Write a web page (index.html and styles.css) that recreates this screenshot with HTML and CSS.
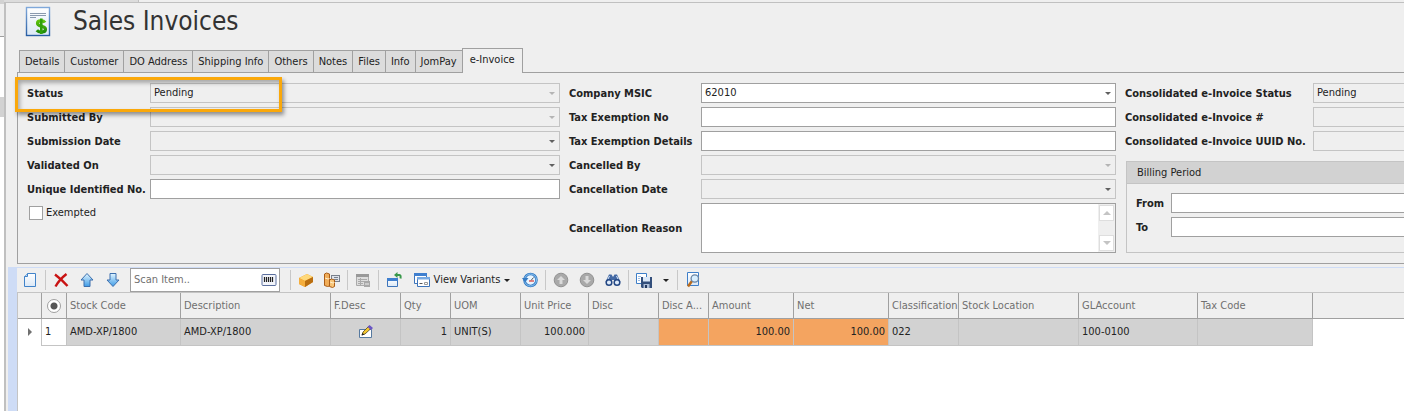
FILE: index.html
```html
<!DOCTYPE html>
<html lang="en">
<head>
<meta charset="utf-8">
<title>Sales Invoices</title>
<link rel="stylesheet" href="styles.css">
</head>
<body>
<div class="nav-edge"><div class="nav-top"></div><div class="nav-item"></div></div>
<div class="main">
  <div class="doc-tabs"><div class="doc-tab"></div></div>
  <main class="window">
    <header class="title-bar">
      <svg class="title-icon" width="26" height="31" viewBox="0 0 26 31">
        <defs>
          <linearGradient id="paper" x1="0" y1="0" x2="0" y2="1"><stop offset="0" stop-color="#fff"/><stop offset="1" stop-color="#dbe8f6"/></linearGradient>
          <linearGradient id="frame" x1="0" y1="0" x2="0" y2="1"><stop offset="0" stop-color="#7fa8da"/><stop offset="1" stop-color="#285ea4"/></linearGradient>
          <linearGradient id="blue" x1="0" y1="0" x2="0" y2="1"><stop offset="0" stop-color="#e2f5ff"/><stop offset="1" stop-color="#3d9be6"/></linearGradient>
          <linearGradient id="green" x1="0" y1="0" x2="0" y2="1"><stop offset="0" stop-color="#5fc410"/><stop offset="1" stop-color="#1f8a08"/></linearGradient>
        </defs>
        <rect x="1.500" y="1.500" width="23" height="28" fill="url(#paper)" stroke="url(#frame)" stroke-width="1.400"/>
        <path d="M5 7.500h16M5 9.500h16M5 11.500h6" stroke="#7d8da5" stroke-width=".9"/>
        <path d="M20 16.500c-1.500-2.300-7.500-2.500-7.500.7 0 3.800 8 2.300 8 6 0 3.600-6.500 3.600-8.700 1" fill="none" stroke="url(#green)" stroke-width="3.200"/>
        <path d="M15 12.500h2.600v15.500H15z" fill="#2fa009"/>
      </svg>
      <h1>Sales Invoices</h1>
    </header>

    <nav class="tabs">
      <button>Details</button>
      <button>Customer</button>
      <button>DO Address</button>
      <button>Shipping Info</button>
      <button>Others</button>
      <button>Notes</button>
      <button>Files</button>
      <button>Info</button>
      <button>JomPay</button>
      <button class="active">e-Invoice</button>
    </nav>

    <section class="panel">
      <div class="col col-status">
        <div class="row"><label for="status">Status</label><div class="combo off"><select id="status" disabled><option>Pending</option></select></div></div>
        <div class="row"><label for="submittedBy">Submitted By</label><div class="combo off"><select id="submittedBy" disabled></select></div></div>
        <div class="row"><label for="submissionDate">Submission Date</label><div class="combo readonly"><select id="submissionDate" disabled></select></div></div>
        <div class="row"><label for="validatedOn">Validated On</label><div class="combo readonly"><select id="validatedOn" disabled></select></div></div>
        <div class="row"><label for="uin">Unique Identified No.</label><input type="text" id="uin"></div>
        <div class="check"><input type="checkbox" id="exempted"><label for="exempted">Exempted</label></div>
      </div>
      <div class="col col-tax">
        <div class="row"><label for="msic">Company MSIC</label><div class="combo"><select id="msic"><option>62010</option></select></div></div>
        <div class="row"><label for="exemptNo">Tax Exemption No</label><input type="text" id="exemptNo"></div>
        <div class="row"><label for="exemptDetails">Tax Exemption Details</label><input type="text" id="exemptDetails"></div>
        <div class="row"><label for="cancelledBy">Cancelled By</label><div class="combo off"><select id="cancelledBy" disabled></select></div></div>
        <div class="row"><label for="cancelDate">Cancellation Date</label><div class="combo readonly"><select id="cancelDate" disabled></select></div></div>
        <div class="row tall"><label for="reason">Cancellation Reason</label>
          <div class="memo">
            <textarea id="reason"></textarea>
            <div class="scroll"><button class="up" aria-label="Scroll up"></button><button class="down" aria-label="Scroll down"></button></div>
          </div>
        </div>
      </div>
      <div class="col col-consol">
        <div class="row"><label for="cStatus">Consolidated e-Invoice Status</label><input type="text" id="cStatus" value="Pending" disabled></div>
        <div class="row"><label for="cNo">Consolidated e-Invoice #</label><input type="text" id="cNo" disabled></div>
        <div class="row"><label for="cUuid">Consolidated e-Invoice UUID No.</label><input type="text" id="cUuid" disabled></div>
        <fieldset class="group">
          <legend>Billing Period</legend>
          <div class="group-body">
            <div class="row"><label for="from">From</label><input type="text" id="from"></div>
            <div class="row"><label for="to">To</label><input type="text" id="to"></div>
          </div>
        </fieldset>
      </div>
      <div class="highlight"></div>
    </section>

    <section class="details">
      <div class="toolbar">
        <button aria-label="New"><svg viewBox="0 0 16 16"><path d="M5.500 1.500h8v13h-11v-10z" fill="url(#paper)" stroke="#4183c9"/><path d="M2.500 4.500h3v-3" fill="#b9d8f5" stroke="#4183c9"/></svg></button>
        <span class="sep"></span>
        <button aria-label="Delete"><svg viewBox="0 0 16 16"><path d="M2 2.500C6 5.500 11 10 14.500 14M13.500 2C9 5.500 5 10 2.500 14.500" fill="none" stroke="#c91313" stroke-width="2.400"/></svg></button>
        <button aria-label="Move up"><svg viewBox="0 0 16 16"><path d="M8 1.500l6 6.500h-3v6.500H5V8H2z" fill="url(#blue)" stroke="#3c6fae"/></svg></button>
        <button aria-label="Move down"><svg viewBox="0 0 16 16"><path d="M8 14.500L2 8h3V1.500h6V8h3z" fill="url(#blue)" stroke="#3c6fae"/></svg></button>
        <div class="scan">
          <input type="text" placeholder="Scan Item.." aria-label="Scan Item">
          <button aria-label="Scan barcode"><svg viewBox="0 0 16 12"><rect x="1" y="0.500" width="14" height="11" rx="1" fill="#f2f4fa" stroke="#5b6f9e"/><path d="M3.500 3v5M5.500 3v5M7.500 3v5M9.500 3v5M11.500 3v5" stroke="#222" stroke-width="1.200"/></svg></button>
        </div>
        <span class="gap"></span>
        <span class="sep"></span>
        <button aria-label="Item"><svg viewBox="0 0 16 16"><path d="M1 6l8-4 6 3v5l-8 5-6-3z" fill="#e88f1c"/><path d="M1 6l8-4 6 3-8 4z" fill="#ffd97a"/><path d="M1 6l6 3v6l-6-3z" fill="#f5ae3c"/><path d="M7 9l8-4v5l-8 5z" fill="#b96e10"/></svg></button>
        <button aria-label="Item package"><svg viewBox="0 0 16 16"><rect x="7.500" y="3.500" width="8" height="6" fill="#dde2ea" stroke="#79808c"/><path d="M10 5.500h4M10 7.500h4" stroke="#79808c"/><path d="M.5 2l2-1 3 1v12l-2 .5-3-1z" fill="#f1ad58" stroke="#ab5d16"/><path d="M5.500 8l2-1 3 1v6.500l-2 1-3-1z" fill="#f8c477" stroke="#ab5d16"/><path d="M1 6l3 1 1.500-.5M6 10l3 1 1.500-.5" fill="none" stroke="#fff0ce"/></svg></button>
        <span class="sep"></span>
        <button aria-label="Grid options" disabled><svg viewBox="0 0 16 16"><path d="M1.500 2.500h12v11h-12z" fill="#ddd" stroke="#aaa"/><path d="M1 2h13v3H1z" fill="#999"/><path d="M3 7.500h9M3 9.500h9M3 11.500h5M5.500 6v7" stroke="#aaa"/><path d="M9 9h6v6H9z" fill="#a8a8a8"/><path d="M10 12h4" stroke="#eee"/></svg></button>
        <span class="sep"></span>
        <button aria-label="Open window"><svg viewBox="0 0 16 16"><path d="M1.500 6.500h10v8h-10z" fill="url(#paper)" stroke="#3d74ba"/><path d="M1 6h11v3H1z" fill="#3f7fcf"/><path d="M10 3h3.500q1.500 0 1 3.500" fill="none" stroke="#39984a" stroke-width="2"/><path d="M11.500 0L8 3l3.500 3z" fill="#39984a"/></svg></button>
        <button class="variants"><svg viewBox="0 0 16 16"><path d="M.5 1.500h12v10H.5z" fill="#fff" stroke="#3d74ba"/><path d="M0 1h13v3H0z" fill="#3f7fcf"/><path d="M3.500 5.500h12v9h-12z" fill="#fff" stroke="#3d74ba"/><path d="M3 5h13v2.500H3z" fill="#77a9e2"/><path d="M5.500 11.500h3" stroke="#555"/><path d="M10.500 10.500h3v2h-3z" fill="none" stroke="#999"/></svg>View Variants<i class="caret"></i></button>
        <button aria-label="Reset"><svg viewBox="0 0 16 16"><circle cx="8.500" cy="8" r="6" fill="#e9f5ff" stroke="#367cc4" stroke-width="2.600"/><circle cx="8.500" cy="8" r="6" fill="none" stroke="#8bc3f1"/><path d="M0 6h6.500L3 10.500z" fill="#367cc4"/><path d="M11.500 5.500L9 8.500" stroke="#555"/><path d="M7 9h5" stroke="#d94545" stroke-width="1.300"/></svg></button>
        <span class="sep"></span>
        <button aria-label="Previous" disabled><svg viewBox="0 0 16 16"><circle cx="8" cy="8" r="6.800" fill="#a9a9a9" stroke="#929292"/><path d="M8 4l4 4H9.500v4h-3V8H4z" fill="#dadada"/></svg></button>
        <button aria-label="Next" disabled><svg viewBox="0 0 16 16"><circle cx="8" cy="8" r="6.800" fill="#a9a9a9" stroke="#929292"/><path d="M8 12L4 8h2.500V4h3v4H12z" fill="#dadada"/></svg></button>
        <button aria-label="Find"><svg viewBox="0 0 16 16"><path d="M4 2.500h2.500L8 5l1.500-2.500H12L15.500 10 12 13 9 11V8H7v3l-3 2L.5 10z" fill="#4469a4"/><circle cx="4" cy="10.500" r="2.800" fill="#e1edfb" stroke="#254884" stroke-width="1.500"/><circle cx="12" cy="10.500" r="2.800" fill="#e1edfb" stroke="#254884" stroke-width="1.500"/><path d="M4.500 4L3 7M11.500 4L13 7" stroke="#d6e6fa"/></svg></button>
        <span class="sep"></span>
        <button aria-label="Save layout"><svg viewBox="0 0 16 16"><path d="M.5 1.500h10v10H.5z" fill="#fff" stroke="#3e7fc9"/><path d="M2 4.500h3M2 6.500h2M2 8.500h2" stroke="#9cbce2"/><path d="M5 5h11v11H6l-1-1z" fill="#334f7b"/><path d="M7 5h7v4.500H7z" fill="#dce9f8"/><path d="M7.500 12h6v4h-6z" fill="#aebfd8"/><path d="M9 13h2v3H9z" fill="#253a5f"/></svg></button>
        <button class="drop" aria-label="Save options"><i class="caret"></i></button>
        <span class="sep"></span>
        <button aria-label="Preview"><svg viewBox="0 0 16 16"><path d="M2.500.5h11v13h-11z" fill="url(#paper)" stroke="#3e7fc9"/><path d="M7 9l-4 5.500" stroke="#b86b1d" stroke-width="2.500"/><circle cx="9.800" cy="6.500" r="3.700" fill="#d8efff" stroke="#6984a4" stroke-width="1.300"/></svg></button>
      </div>

      <div class="grid">
      <table>
        <colgroup>
          <col class="w-mark"><col class="w-no"><col class="w-code"><col class="w-desc"><col class="w-s"><col class="w-xs"><col class="w-s"><col class="w-price"><col class="w-s"><col class="w-xs"><col class="w-amount"><col class="w-net"><col class="w-s"><col class="w-loc"><col class="w-gl"><col class="w-tax"><col>
        </colgroup>
        <thead>
          <tr>
            <th></th>
            <th class="pick"><input type="radio" checked aria-label="Select rows"></th>
            <th>Stock Code</th>
            <th>Description</th>
            <th>F.Desc</th>
            <th>Qty</th>
            <th>UOM</th>
            <th>Unit Price</th>
            <th>Disc</th>
            <th>Disc A...</th>
            <th>Amount</th>
            <th>Net</th>
            <th>Classification</th>
            <th>Stock Location</th>
            <th>GLAccount</th>
            <th>Tax Code</th>
            <th class="rest"></th>
          </tr>
        </thead>
        <tbody>
          <tr>
            <td class="mark"><i class="pointer"></i></td>
            <td class="no">1</td>
            <td>AMD-XP/1800</td>
            <td>AMD-XP/1800</td>
            <td class="edit"><svg width="16" height="14" viewBox="0 0 16 14"><path d="M1.500 4.500h12v8h-12z" fill="#fff" stroke="#56799f"/><path d="M4 10l1-3 6-6 2.500 2L7 9z" fill="#f4c62d" stroke="#51451f" stroke-width=".8"/><path d="M9.500 2l2-2L15 3l-2 2z" fill="#6a55c5"/><path d="M3.500 10.500l1-2.500 2 1.500z" fill="#222"/></svg></td>
            <td class="num">1</td>
            <td>UNIT(S)</td>
            <td class="num">100.000</td>
            <td></td>
            <td class="calc"></td>
            <td class="calc num">100.00</td>
            <td class="calc num">100.00</td>
            <td>022</td>
            <td></td>
            <td>100-0100</td>
            <td></td>
            <td class="rest"></td>
          </tr>
        </tbody>
      </table>
      </div>
    </section>
  </main>
</div>
</body>
</html>
```
FILE: styles.css
```css
* {
  box-sizing: border-box;
}
body {
  margin: 0;
  min-height: 100vh;
  display: flex;
  overflow: hidden;
  background: #efefef;
  color: #222;
  font-family: "DejaVu Sans Condensed", "DejaVu Sans", sans-serif;
  font-size: 11px;
  line-height: 14px;
}
button, input, select, textarea {
  font: inherit;
  color: inherit;
  margin: 0;
  border-radius: 0;
}
button {
  border: 0;
  background: none;
  padding: 0;
}

/* edge of the navigation pane */
.nav-edge {
  flex: none;
  width: 4px;
  background: #fff;
}
.nav-top {
  height: 37px;
  background: #efefef;
  border-top: 4px solid #d2d2d2;
  border-bottom: 1px solid #a0a0a0;
}
.nav-item {
  height: 20px;
  margin-top: 60px;
  background: #d2d2d2;
}
.main {
  flex: 1;
  min-width: 0;
  display: flex;
  flex-direction: column;
}
.doc-tabs {
  height: 2px;
}
.doc-tab {
  width: 135px;
  height: 2px;
  background: #dcdcdc;
  border-right: 1px solid #c0c0c0;
}
.window {
  flex: 1;
  display: flex;
  flex-direction: column;
  border-top: 1px solid #c0c0c0;
  border-left: 2px solid #c0c0c0;
}

.title-bar {
  display: flex;
  align-items: center;
  gap: 22px;
  height: 36px;
  padding-left: 19px;
}
h1 {
  margin: 0;
  font-size: 26px;
  line-height: 32px;
  font-weight: normal;
  color: #333;
}

.tabs {
  display: flex;
  align-items: flex-end;
  margin: 9px 0 -1px 13px;
  position: relative;
  z-index: 1;
}
.tabs button {
  height: 22px;
  margin-bottom: 1px;
  padding: 0 5px;
  border: 1px solid #a0a0a0;
  border-bottom: 0;
  border-right: 0;
  background: #dcdcdc;
}
.tabs .active {
  height: 25px;
  margin-bottom: 0;
  padding: 0 7px 2px;
  border-right: 1px solid #a0a0a0;
  background: #efefef;
}

.panel {
  position: relative;
  display: grid;
  grid-template-columns: 533fr 547fr 279px;
  column-gap: 9px;
  margin-left: 11px;
  padding: 10px 0 10px 9px;
  border: 1px solid #a0a0a0;
  border-right: 0;
}
.col {
  display: flex;
  flex-direction: column;
  gap: 4px;
  min-width: 0;
}
.row {
  display: flex;
  align-items: center;
  height: 20px;
}
.row label {
  flex: none;
  font-weight: bold;
  padding-top: 2px;
  white-space: nowrap;
}
.col-status .row label {
  width: 123px;
}
.col-tax .row label {
  width: 132px;
}
.col-consol .row label {
  width: 188px;
}
.row input, .combo {
  flex: 1;
  min-width: 0;
  height: 20px;
  border: 1px solid #a0a0a0;
  background: #fff;
}
.row input {
  padding: 0 3px 2px;
}
.row input:disabled, .off, .readonly {
  border-color: #c4c4c4;
  background: #efefef;
  color: #222;
}
.col-consol > .row input {
  border-right: 0;
}
.combo {
  position: relative;
}
.combo select {
  display: block;
  width: 100%;
  height: 18px;
  padding: 0 3px;
  border: 0;
  background: none;
  appearance: none;
  opacity: 1;
}
.combo::after {
  content: "";
  position: absolute;
  right: 4px;
  top: 8px;
  border: 3px solid transparent;
  border-top-color: #606060;
  border-bottom: 0;
}
.off::after {
  border-top-color: #b4b4b4;
}
.check {
  display: flex;
  align-items: center;
  gap: 3px;
  padding: 3px 0 0 2px;
}
.check input, .pick input {
  appearance: none;
  width: 14px;
  height: 14px;
  border: 1px solid #a0a0a0;
  background: #fff;
}
.row.tall {
  height: 50px;
}
.memo {
  flex: 1;
  min-width: 0;
  display: flex;
  height: 50px;
  border: 1px solid #a0a0a0;
  background: #fff;
}
.memo textarea {
  flex: 1;
  min-width: 0;
  border: 0;
  padding: 2px;
  resize: none;
  overflow: hidden;
  background: none;
}
.scroll {
  display: flex;
  flex-direction: column;
  justify-content: space-between;
  width: 17px;
  padding: 1px;
  background: #efefef;
}
.scroll button {
  display: flex;
  align-items: center;
  justify-content: center;
  height: 16px;
  border: 1px solid #dedede;
  background: #fff;
}
.scroll button::after {
  content: "";
  border: 4px solid transparent;
}
.scroll .up::after {
  border-top: 0;
  border-bottom-color: #c4c4c4;
}
.scroll .down::after {
  border-bottom: 0;
  border-top-color: #c4c4c4;
}
.group {
  margin: 6px 0 0 1px;
  padding: 0;
  min-width: 0;
  height: 92px;
  border: 1px solid #c4c4c4;
  border-right: 0;
}
.group legend {
  float: left;
  width: 100%;
  height: 22px;
  padding: 0 10px;
  line-height: 21px;
  background: #d2d2d2;
  border-bottom: 1px solid #c4c4c4;
}
.group-body {
  clear: both;
  display: flex;
  flex-direction: column;
  gap: 4px;
  padding: 9px 0 0 9px;
}
.col-consol .group-body label {
  width: 35px;
}
.group-body input {
  border-right: 0;
}
.highlight {
  position: absolute;
  left: -3px;
  top: 4px;
  width: 267px;
  height: 35px;
  border: 3px solid #faa80a;
  box-shadow: 2px 3px 4px rgba(0, 0, 0, 0.4), inset 2px 3px 4px rgba(0, 0, 0, 0.3);
  pointer-events: none;
}

/* invoice lines */
.details {
  flex: 1;
  display: flex;
  flex-direction: column;
  margin: 3px 0 0 2px;
  border-left: 9px solid #cedcf6;
  border-top: 1px solid #cedcf6;
  background: #fff;
}
.toolbar {
  display: flex;
  align-items: center;
  height: 25px;
  background: #efefef;
  border-bottom: 1px solid #c4c4c4;
}
.toolbar > button {
  display: flex;
  align-items: center;
  justify-content: center;
  flex: none;
  width: 26px;
  height: 24px;
}
.toolbar svg {
  flex: none;
  width: 16px;
  height: 16px;
}
.sep {
  flex: none;
  width: 1px;
  height: 20px;
  margin: 0 2px;
  background: #c8c8c8;
}
.gap {
  width: 8px;
}
.scan {
  display: flex;
  align-items: center;
  width: 150px;
  height: 24px;
  margin-left: 4px;
  border: 1px solid #a0a0a0;
  background: #fff;
}
.scan input {
  flex: 1;
  min-width: 0;
  border: 0;
  padding: 0 3px;
  background: none;
}
.scan input::placeholder {
  color: #707070;
}
.scan button {
  display: flex;
  padding: 0 2px;
}
.scan svg {
  height: 12px;
}
.toolbar .variants {
  width: 110px;
  gap: 4px;
  white-space: nowrap;
}
.toolbar .drop {
  width: 18px;
}
.caret {
  border: 3px solid transparent;
  border-top-color: #222;
  border-bottom: 0;
}

.grid {
  flex: 1;
  border-left: 1px solid #c4c4c4;
}
table {
  width: 100%;
  table-layout: fixed;
  border-collapse: separate;
  border-spacing: 0;
}
.w-mark { width: 24px; }
.w-no { width: 25px; }
.w-code { width: 114px; }
.w-desc { width: 150px; }
.w-xs { width: 50px; }
.w-s { width: 70px; }
.w-price { width: 68px; }
.w-amount { width: 85px; }
.w-net { width: 95px; }
.w-loc { width: 120px; }
.w-gl { width: 119px; }
.w-tax { width: 115px; }
th, td {
  padding: 0 3px;
  text-align: left;
  white-space: nowrap;
}
th {
  height: 26px;
  background: #efefef;
  border-right: 1px solid #a0a0a0;
  border-bottom: 1px solid #a0a0a0;
  font-weight: normal;
  color: #707070;
}
td {
  height: 27px;
  background: #d2d2d2;
  border-right: 1px solid #c4c4c4;
  border-bottom: 1px solid #c4c4c4;
}
.num {
  text-align: right;
}
.calc {
  background: #f4a460;
}
.no {
  background: #fff;
}
td.mark, td.rest {
  background: #fff;
  border-bottom: 0;
}
th.rest, td.rest {
  border-right: 0;
}
.pick, .edit, .mark {
  text-align: center;
}
.pick input, .edit svg {
  display: block;
  margin: 0 auto;
}
.pick input {
  border-radius: 50%;
  background: radial-gradient(#555 3px, #fff 4px);
}
.pointer {
  display: inline-block;
  border: 4px solid transparent;
  border-left-color: #707070;
  border-right: 0;
}
```
